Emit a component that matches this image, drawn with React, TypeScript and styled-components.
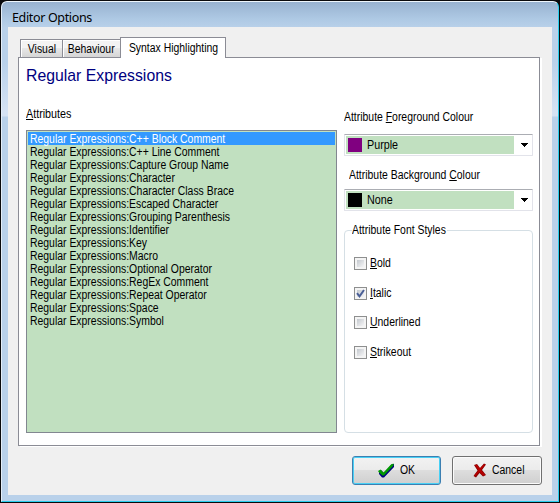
import React from "react";
import styled, { createGlobalStyle, css } from "styled-components";

const Global = createGlobalStyle`
  * { box-sizing: border-box; }
  body { margin: 0; background: #000; overflow: hidden; }
`;

const Frame = styled.div`
  width: 560px;
  height: 503px;
  padding: 1px;
  background: #0a0a0c;
  font: 12.5px/13px "Liberation Sans", Arial, sans-serif;
  color: #000;
`;

const Chrome = styled.div`
  width: 558px;
  height: 501px;
  padding: 0 6px 6px;
  border: 1px solid;
  border-color: #eef6fc #29cdec #29cdec #e4eef8;
  border-radius: 6px 6px 0 0;
  background:
    linear-gradient(#98b2d0, #aec9e4 17px, #b9d1ea 26px, transparent 26px),
    linear-gradient(#b9d1ea 26px, #b9d1ea 60px, #d5e2f3 110px, #d5e2f3 114px, #b9d1ea 115px);
`;

const TitleBar = styled.header`
  height: 25px;
  padding: 6px 0 0 4px;
  font: 12.5px/19px "Noto Sans", sans-serif;
  letter-spacing: -0.35px;
`;

const Client = styled.main`
  height: 468px;
  padding: 10px 11px 0 10px;
  background: #f0f0f0;
`;

const TabStrip = styled.nav`
  display: flex;
  align-items: flex-end;
  height: 20px;
  padding-left: 2px;
`;

const Tab = styled.div<{ $width: number; $active?: boolean }>`
  display: flex;
  justify-content: center;
  width: ${(p) => p.$width}px;
  height: 18px;
  padding-top: 3px;
  white-space: nowrap;
  border: 1px solid #8b8c95;
  border-bottom: 0;
  border-right-width: ${(p) => (p.$active ? 1 : 0)}px;
  box-shadow: inset 1px 1px #fff;
  background: linear-gradient(#f3f3f3 0 45%, #e7e7e7 50%, #d5d5d5);
  ${(p) =>
    p.$active &&
    css`
      height: 21px;
      margin-bottom: -1px;
      padding-top: 4px;
      background: #fff;
      z-index: 1;
    `}
`;

/* Condensed lettering used by every control. */
const Narrow = styled.span<{ $scale?: number; $center?: boolean }>`
  display: inline-block;
  white-space: nowrap;
  transform: scaleX(${(p) => p.$scale ?? 0.834});
  transform-origin: ${(p) => (p.$center ? "center" : "left")};
`;

const Sheet = styled.section`
  height: 389px;
  width: 522px;
  padding: 8px 6px 0 7px;
  border: 1px solid #8b8c95;
  background: #fff;
  box-shadow: 2px 1px #fff;
`;

const Heading = styled.h1`
  margin: 0;
  height: 42px;
  font: 400 17px/20px "Liberation Sans", Arial, sans-serif;
  color: #000080;
`;

const Columns = styled.div`
  display: flex;
  gap: 7px;
`;

const ListColumn = styled.div`
  width: 311px;
`;

const Label = styled.div<{ $height: number; $indent?: number; $top?: number }>`
  height: ${(p) => p.$height}px;
  padding: ${(p) => p.$top ?? 0}px 0 0 ${(p) => p.$indent ?? 0}px;
  white-space: nowrap;
`;

const Key = styled.span`
  text-decoration: underline;
  text-decoration-thickness: 1px;
  text-underline-offset: 1px;
`;

const ListBox = styled.ul`
  margin: 0;
  padding: 1px;
  height: 303px;
  list-style: none;
  border: 1px solid #828790;
  background: #c1e0c0;
`;

const ListItem = styled.li<{ $selected: boolean }>`
  height: 13px;
  padding-left: 2px;
  line-height: 14px;
  white-space: nowrap;
  color: ${(p) => (p.$selected ? "#fff" : "#000")};
  background: ${(p) => (p.$selected ? "#3399ff" : "transparent")};
`;

const SettingsColumn = styled.div`
  width: 189px;
  padding-top: 3px;
`;

const Combo = styled.div`
  display: flex;
  align-items: center;
  height: 22px;
  padding: 1px;
  border: 1px solid #e2e3ea;
  border-top-color: #abadb3;
  border-radius: 1px;
`;

const ComboValue = styled.div`
  display: flex;
  align-items: center;
  gap: 5px;
  width: 168px;
  height: 18px;
  padding-left: 2px;
  background: #c1e0c0;
`;

const Swatch = styled.span<{ $color: string }>`
  width: 14px;
  height: 14px;
  background: ${(p) => p.$color};
`;

const Arrow = styled.svg`
  margin-left: 7px;
`;

const Group = styled.fieldset`
  height: 209px;
  margin: 13px 0 0;
  padding: 20px 9px 0;
  border: 1px solid #d5dfe5;
  border-radius: 4px;
  min-width: 0;
`;

const Legend = styled.legend`
  width: 95px;
  margin-left: -2px;
  padding: 0;
  line-height: 13px;
`;

const CheckRow = styled.label`
  display: flex;
  align-items: center;
  gap: 3px;
  height: 13px;
  margin-bottom: 16.6px;
`;

const CheckBox = styled.span`
  display: flex;
  width: 13px;
  height: 13px;
  padding: 1px;
  border: 1px solid #8e8f8f;
  background: linear-gradient(135deg, #c3c8ce, #f5f5f6) 2px 2px / 7px 7px no-repeat #f4f4f4;
`;

const Footer = styled.footer`
  display: flex;
  justify-content: flex-end;
  gap: 11px;
  padding: 10px 0 0;
  margin-right: -1px;
`;

const Button = styled.button<{ $primary?: boolean }>`
  display: flex;
  align-items: center;
  gap: 5px;
  width: ${(p) => (p.$primary ? 89 : 90)}px;
  height: 29px;
  padding: 0 0 0 ${(p) => (p.$primary ? 25 : 20)}px;
  font: inherit;
  color: #000;
  border: 1px solid ${(p) => (p.$primary ? "#3c7fb1" : "#707070")};
  border-radius: 3px;
  box-shadow: inset 0 0 0 1px ${(p) => (p.$primary ? "#48d0f5" : "#fbfbfb")};
  background: linear-gradient(#f2f2f2, #ebebeb 49%, #dddddd 50%, #cfcfcf);
`;

const attributes = [
  "C++ Block Comment",
  "C++ Line Comment",
  "Capture Group Name",
  "Character",
  "Character Class Brace",
  "Escaped Character",
  "Grouping Parenthesis",
  "Identifier",
  "Key",
  "Macro",
  "Optional Operator",
  "RegEx Comment",
  "Repeat Operator",
  "Space",
  "Symbol",
];

const fontStyles = [
  { name: "Bold", checked: false },
  { name: "Italic", checked: true },
  { name: "Underlined", checked: false },
  { name: "Strikeout", checked: false },
];

function ColourCombo({ name, color }: { name: string; color: string }) {
  return (
    <Combo>
      <ComboValue>
        <Swatch $color={color} />
        <Narrow $scale={0.86}>{name}</Narrow>
      </ComboValue>
      <Arrow width="7" height="4" shapeRendering="crispEdges">
        <path d="M0 0H7V1H6V2H5V3H4V4H3V3H2V2H1V1H0Z" />
      </Arrow>
    </Combo>
  );
}

export default function App() {
  return (
    <>
      <Global />
      <Frame>
        <Chrome>
          <TitleBar>Editor Options</TitleBar>
          <Client>
            <TabStrip>
              <Tab $width={42}><Narrow $center>Visual</Narrow></Tab>
              <Tab $width={58}><Narrow $center>Behaviour</Narrow></Tab>
              <Tab $width={106} $active><Narrow $center>Syntax Highlighting</Narrow></Tab>
            </TabStrip>
            <Sheet>
              <Heading><Narrow $scale={0.93}>Regular Expressions</Narrow></Heading>
              <Columns>
                <ListColumn>
                  <Label $height={22}><Narrow $scale={0.86}><Key>A</Key>ttributes</Narrow></Label>
                  <ListBox>
                    {attributes.map((name, i) => (
                      <ListItem key={name} $selected={i === 0}>
                        <Narrow>Regular Expressions:{name}</Narrow>
                      </ListItem>
                    ))}
                  </ListBox>
                </ListColumn>
                <SettingsColumn>
                  <Label $height={23}><Narrow>Attribute <Key>F</Key>oreground Colour</Narrow></Label>
                  <ColourCombo name="Purple" color="#800080" />
                  <Label $height={33} $indent={5} $top={13}>
                    <Narrow>Attribute Background <Key>C</Key>olour</Narrow>
                  </Label>
                  <ColourCombo name="None" color="#000" />
                  <Group>
                    <Legend><Narrow>Attribute Font Styles</Narrow></Legend>
                    {fontStyles.map(({ name, checked }) => (
                      <CheckRow key={name}>
                        <CheckBox>
                          {checked && (
                            <svg width="9" height="9" viewBox="0 0 9 9">
                              <path d="M1 4.2L3.5 7.3L8 1" fill="none" stroke="#4a5f97" strokeWidth="2" />
                            </svg>
                          )}
                        </CheckBox>
                        <Narrow><Key>{name[0]}</Key>{name.slice(1)}</Narrow>
                      </CheckRow>
                    ))}
                  </Group>
                </SettingsColumn>
              </Columns>
            </Sheet>
            <Footer>
              <Button $primary>
                <svg width="17" height="15" viewBox="0 0 17 15">
                  <path d="M1 9L3 7L6 10L14 1H16V4L6 14.5H4L1 11Z" fill="#000080" />
                  <path d="M0 8L2.5 6.5L5.5 9.5L13 1.5L15.5 0.5V2.5L6 12.5H4.5L1 9.5Z" fill="#009a00" />
                </svg>
                <Narrow>OK</Narrow>
              </Button>
              <Button>
                <svg width="14" height="15" viewBox="0 0 14 15">
                  <path d="M1 2L4 1L7 5L11 0.5L13 1.5L9 7L13 12L10 13.5L6.5 10L3 14.5L0.5 13L4.5 7.5Z" fill="#8c0000" />
                  <path d="M2 2L4 2L7 5.5L11 1.2L12 1.8L8 7L12 12L10 12.5L6.5 8.5L2.5 13L1.5 12L5.5 7.5Z" fill="#b80000" />
                </svg>
                <Narrow>Cancel</Narrow>
              </Button>
            </Footer>
          </Client>
        </Chrome>
      </Frame>
    </>
  );
}
